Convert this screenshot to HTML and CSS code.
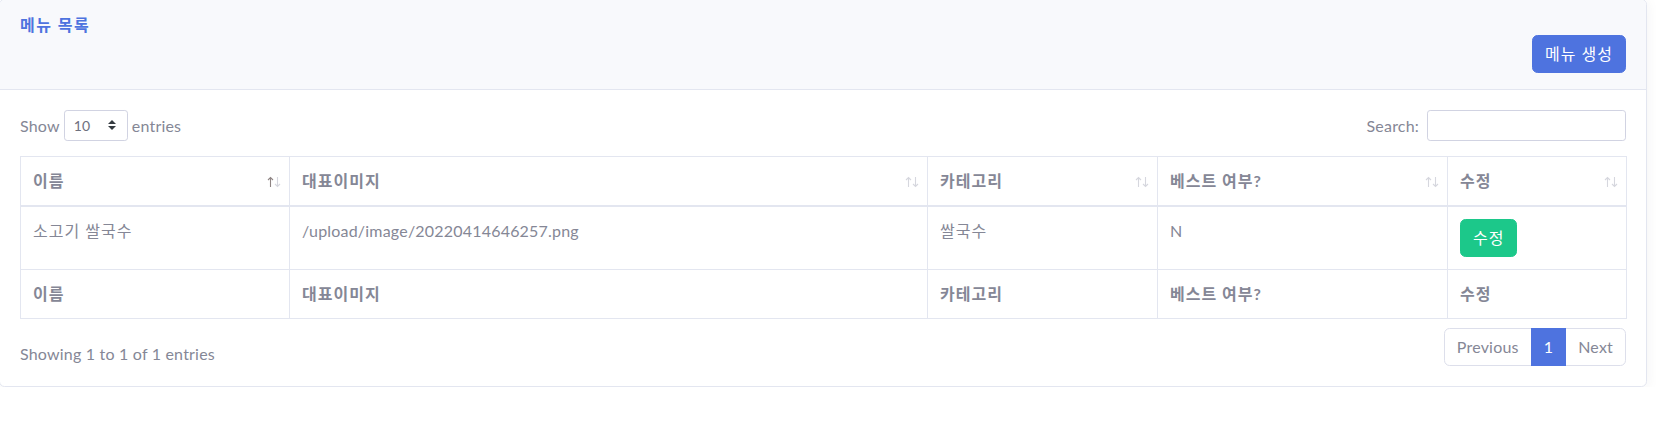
FILE: index.html
```html
<!DOCTYPE html>
<html lang="ko">
<head>
<meta charset="utf-8">
<title>메뉴 목록</title>
<link rel="stylesheet" href="styles.css">
</head>
<body>
<div class="card">
  <div class="card-header">
    <h6 class="card-title">메뉴 목록</h6>
    <div class="header-actions"><a class="btn btn-primary" href="#">메뉴 생성</a></div>
  </div>
  <div class="card-body">
    <div class="dt-top">
      <label class="dt-length">Show
        <span class="select-wrap">
          <select class="dt-select"><option>10</option><option>25</option><option>50</option><option>100</option></select>
          <svg class="select-caret" width="8" height="10" viewBox="0 0 4 5"><path fill="#343a40" d="M2 0L0 2h4zm0 5L0 3h4z"/></svg>
        </span>
        entries</label>
      <label class="dt-search">Search:<input class="dt-input" type="search"></label>
    </div>
    <table class="dt-table">
      <colgroup>
        <col class="c-name"><col class="c-img"><col class="c-cat"><col class="c-best"><col class="c-edit">
      </colgroup>
      <thead>
        <tr>
          <th><div class="th-inner"><span>이름</span><svg class="sort" width="14" height="12" viewBox="0 0 14 12"><path class="arr active" d="M3.5 11V1.5M1 4l2.5-2.5L6 4"/><path class="arr" d="M10.5 1v9.5M8 8l2.5 2.5L13 8"/></svg></div></th>
          <th><div class="th-inner"><span>대표이미지</span><svg class="sort" width="14" height="12" viewBox="0 0 14 12"><path class="arr" d="M3.5 11V1.5M1 4l2.5-2.5L6 4"/><path class="arr" d="M10.5 1v9.5M8 8l2.5 2.5L13 8"/></svg></div></th>
          <th><div class="th-inner"><span>카테고리</span><svg class="sort" width="14" height="12" viewBox="0 0 14 12"><path class="arr" d="M3.5 11V1.5M1 4l2.5-2.5L6 4"/><path class="arr" d="M10.5 1v9.5M8 8l2.5 2.5L13 8"/></svg></div></th>
          <th><div class="th-inner"><span>베스트 여부?</span><svg class="sort" width="14" height="12" viewBox="0 0 14 12"><path class="arr" d="M3.5 11V1.5M1 4l2.5-2.5L6 4"/><path class="arr" d="M10.5 1v9.5M8 8l2.5 2.5L13 8"/></svg></div></th>
          <th><div class="th-inner"><span>수정</span><svg class="sort" width="14" height="12" viewBox="0 0 14 12"><path class="arr" d="M3.5 11V1.5M1 4l2.5-2.5L6 4"/><path class="arr" d="M10.5 1v9.5M8 8l2.5 2.5L13 8"/></svg></div></th>
        </tr>
      </thead>
      <tbody>
        <tr>
          <td class="ko">소고기 쌀국수</td>
          <td>/upload/image/20220414646257.png</td>
          <td class="ko">쌀국수</td>
          <td>N</td>
          <td><a class="btn btn-success" href="#">수정</a></td>
        </tr>
      </tbody>
      <tfoot>
        <tr>
          <th>이름</th>
          <th>대표이미지</th>
          <th>카테고리</th>
          <th>베스트 여부?</th>
          <th>수정</th>
        </tr>
      </tfoot>
    </table>
    <div class="dt-bottom">
      <div class="dt-info">Showing 1 to 1 of 1 entries</div>
      <ul class="pagination">
        <li class="page-item disabled"><a class="page-link" href="#">Previous</a></li>
        <li class="page-item active"><a class="page-link" href="#">1</a></li>
        <li class="page-item disabled"><a class="page-link" href="#">Next</a></li>
      </ul>
    </div>
  </div>
</div>
</body>
</html>
```

FILE: styles.css
```css
* { box-sizing: border-box; }

html, body {
  margin: 0;
  padding: 0;
  background: #ffffff;
}

body {
  font-family: "Lato", "Noto Sans CJK KR", sans-serif;
  font-size: 16px;
  line-height: 1.5;
  color: #858796;
  letter-spacing: 0.2px;
}

.card {
  width: 1648px;
  margin: -1px 0 0 -1px;
  background: #ffffff;
  border: 1px solid #e3e6f0;
  border-radius: 5.6px;
  box-shadow: 0 2px 14px 0 rgba(58, 59, 69, 0.06);
  overflow: hidden;
}

.card-header {
  background: #f8f9fc;
  border-bottom: 1px solid #e3e6f0;
  padding: 15px 20px 16px;
}

.card-title {
  margin: 0 0 1px;
  font-size: 16px;
  line-height: 19px;
  font-weight: 700;
  color: #4e73df;
  letter-spacing: 1.5px;
}

.header-actions {
  display: flex;
  justify-content: flex-end;
}

.btn {
  display: inline-block;
  padding: 6px 12px;
  font-size: 16px;
  line-height: 24px;
  border: 1px solid transparent;
  border-radius: 5.6px;
  text-decoration: none;
  color: #ffffff;
  font-weight: 400;
  letter-spacing: 1px;
}

.btn-primary {
  background: #4e73df;
  border-color: #4e73df;
}

.btn-success {
  background: #1cc88a;
  border-color: #1cc88a;
}

.card-body {
  padding: 20px;
}

.dt-top {
  display: flex;
  justify-content: space-between;
  align-items: center;
  height: 31px;
}

.dt-length,
.dt-search {
  display: flex;
  align-items: center;
  gap: 4px;
  font-size: 16px;
}

.dt-search {
  gap: 8px;
}

.select-wrap {
  position: relative;
  display: inline-block;
  width: 64px;
  height: 31px;
}

.dt-select {
  -webkit-appearance: none;
  appearance: none;
  width: 64px;
  height: 31px;
  padding: 4px 24px 4px 9px;
  font-family: "Lato", sans-serif;
  font-size: 14px;
  color: #6e707e;
  background: #ffffff;
  border: 1px solid #d1d3e2;
  border-radius: 3.2px;
}

.select-caret {
  position: absolute;
  right: 12px;
  top: 10px;
  pointer-events: none;
}

.dt-input {
  width: 199px;
  height: 31px;
  border: 1px solid #d1d3e2;
  border-radius: 3.2px;
  background: #ffffff;
  padding: 4px 8px;
}

.dt-table {
  width: 100%;
  margin-top: 15px;
  border-collapse: collapse;
  table-layout: fixed;
  border: 1px solid #e3e6f0;
}

.c-name { width: 269px; }
.c-img { width: 638px; }
.c-cat { width: 230px; }
.c-best { width: 290px; }
.c-edit { width: 179px; }

.dt-table th,
.dt-table td {
  border: 1px solid #e3e6f0;
  padding: 12px;
  text-align: left;
  vertical-align: top;
  line-height: 24px;
}

.dt-table th {
  font-weight: 700;
  letter-spacing: 1px;
}

.dt-table .ko {
  letter-spacing: 1px;
}

.dt-table thead th {
  border-bottom: 2px solid #e3e6f0;
  padding-right: 8px;
}

.dt-table td {
  font-weight: 400;
}

.th-inner {
  display: flex;
  justify-content: space-between;
  align-items: center;
}

.sort {
  flex: none;
  margin-top: 1px;
}

.arr {
  fill: none;
  stroke: #d6d7de;
  stroke-width: 1.1;
}

.arr.active {
  stroke: #8f8584;
}

.dt-bottom {
  display: flex;
  justify-content: space-between;
  align-items: flex-start;
  margin-top: 9px;
}

.dt-info {
  padding-top: 14px;
  line-height: 24px;
}

.pagination {
  display: flex;
  list-style: none;
  margin: 0;
  padding: 0;
}

.page-link {
  display: block;
  padding: 8px 12px;
  line-height: 20px;
  font-size: 16px;
  text-decoration: none;
  color: #858796;
  background: #ffffff;
  border: 1px solid #dddfeb;
  margin-left: -1px;
}

.page-item:first-child .page-link {
  margin-left: 0;
  border-radius: 5.6px 0 0 5.6px;
}

.page-item:last-child .page-link {
  border-radius: 0 5.6px 5.6px 0;
}

.page-item.active .page-link {
  background: #4e73df;
  border-color: #4e73df;
  color: #ffffff;
  position: relative;
  z-index: 1;
}
```
